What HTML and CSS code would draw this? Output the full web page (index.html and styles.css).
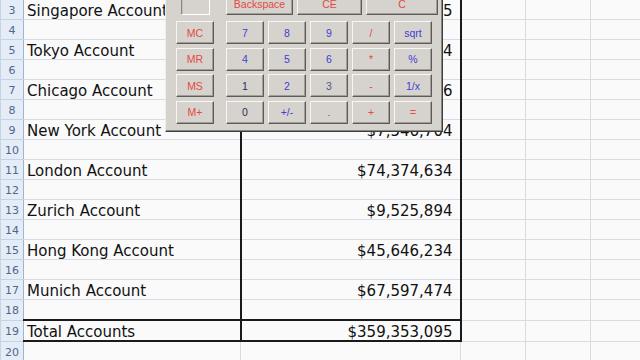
FILE: index.html
```html
<!DOCTYPE html>
<html>
<head>
<meta charset="utf-8">
<link rel="stylesheet" href="styles.css">
</head>
<body>
<div class="page">
  <table class="sheet">
    <colgroup>
      <col class="w-h"><col class="w-a"><col class="w-b"><col class="w-c"><col class="w-c"><col class="w-c"><col>
    </colgroup>
    <tbody>
      <tr><td class="h">3</td><td class="a">Singapore Account</td><td class="b">$52,418,365</td><td></td><td></td><td></td><td></td></tr>
      <tr><td class="h">4</td><td class="a"></td><td class="b"></td><td></td><td></td><td></td><td></td></tr>
      <tr><td class="h">5</td><td class="a">Tokyo Account</td><td class="b">$61,327,514</td><td></td><td></td><td></td><td></td></tr>
      <tr><td class="h">6</td><td class="a"></td><td class="b"></td><td></td><td></td><td></td><td></td></tr>
      <tr><td class="h">7</td><td class="a">Chicago Account</td><td class="b">$40,916,276</td><td></td><td></td><td></td><td></td></tr>
      <tr><td class="h">8</td><td class="a"></td><td class="b"></td><td></td><td></td><td></td><td></td></tr>
      <tr><td class="h">9</td><td class="a">New York Account</td><td class="b">$7,546,704</td><td></td><td></td><td></td><td></td></tr>
      <tr><td class="h">10</td><td class="a"></td><td class="b"></td><td></td><td></td><td></td><td></td></tr>
      <tr><td class="h">11</td><td class="a">London Account</td><td class="b">$74,374,634</td><td></td><td></td><td></td><td></td></tr>
      <tr><td class="h">12</td><td class="a"></td><td class="b"></td><td></td><td></td><td></td><td></td></tr>
      <tr><td class="h">13</td><td class="a">Zurich Account</td><td class="b">$9,525,894</td><td></td><td></td><td></td><td></td></tr>
      <tr><td class="h">14</td><td class="a"></td><td class="b"></td><td></td><td></td><td></td><td></td></tr>
      <tr><td class="h">15</td><td class="a">Hong Kong Account</td><td class="b">$45,646,234</td><td></td><td></td><td></td><td></td></tr>
      <tr><td class="h">16</td><td class="a"></td><td class="b"></td><td></td><td></td><td></td><td></td></tr>
      <tr><td class="h">17</td><td class="a">Munich Account</td><td class="b">$67,597,474</td><td></td><td></td><td></td><td></td></tr>
      <tr><td class="h">18</td><td class="a"></td><td class="b"></td><td></td><td></td><td></td><td></td></tr>
      <tr class="total"><td class="h">19</td><td class="a">Total Accounts</td><td class="b">$359,353,095</td><td></td><td></td><td></td><td></td></tr>
      <tr><td class="h">20</td><td class="a"></td><td class="plain"></td><td></td><td></td><td></td><td></td></tr>
      <tr><td class="h">21</td><td class="a"></td><td class="plain"></td><td></td><td></td><td></td><td></td></tr>
    </tbody>
  </table>

  <div class="calc">
    <div class="calc-top">
      <div class="mem"></div>
      <div class="topkeys">
        <div class="key red">Backspace</div>
        <div class="key red">CE</div>
        <div class="key red">C</div>
      </div>
    </div>
    <div class="calc-main">
      <div class="memkeys">
        <div class="key red">MC</div>
        <div class="key red">MR</div>
        <div class="key red">MS</div>
        <div class="key red">M+</div>
      </div>
      <div class="keypad">
        <div class="key blue">7</div>
        <div class="key blue">8</div>
        <div class="key blue">9</div>
        <div class="key red">/</div>
        <div class="key blue">sqrt</div>
        <div class="key blue">4</div>
        <div class="key blue">5</div>
        <div class="key blue">6</div>
        <div class="key red">*</div>
        <div class="key blue">%</div>
        <div class="key dark">1</div>
        <div class="key blue">2</div>
        <div class="key grey">3</div>
        <div class="key red">-</div>
        <div class="key blue">1/x</div>
        <div class="key dark">0</div>
        <div class="key blue">+/-</div>
        <div class="key grey">.</div>
        <div class="key red">+</div>
        <div class="key red">=</div>
      </div>
    </div>
  </div>
</div>
</body>
</html>
```

FILE: styles.css
```css
html, body {
  margin: 0;
  padding: 0;
}
body {
  width: 640px;
  height: 360px;
  overflow: hidden;
  background: #fafafa;
}
.page {
  position: relative;
  width: 640px;
  height: 360px;
  overflow: hidden;
}
.sheet {
  border-collapse: collapse;
  table-layout: fixed;
  width: 700px;
  margin-top: -1px;
  font-family: "DejaVu Sans", Verdana, sans-serif;
  font-size: 15px;
  color: #111111;
}
.w-h { width: 23px; }
.w-a { width: 217px; }
.w-b { width: 220px; }
.w-c { width: 65px; }
.sheet tr {
  height: 20px;
}
.sheet td {
  padding: 3px 0 0 0;
  height: 16px;
  border: 1px solid #d9dbe3;
  background: #fafafa;
  white-space: nowrap;
  overflow: hidden;
  line-height: 16px;
  vertical-align: top;
}
.sheet td.h {
  background: #e4ecf7;
  border-color: #c6d3e3;
  border-right: 1px solid #9fb5cf;
  color: #4f6789;
  font-size: 11px;
  text-align: center;
}
.sheet td.a {
  padding-left: 3px;
}
.sheet td.b {
  text-align: right;
  padding-right: 7px;
  border-left: 2px solid #1a1a1a;
  border-right: 2px solid #1a1a1a;
}
.sheet td.plain {
  border-left: 1px solid #d9dbe3;
  border-right: 1px solid #d9dbe3;
}
.sheet tr.total td.a,
.sheet tr.total td.b {
  border-top: 2px solid #1a1a1a;
  border-bottom: 2px solid #1a1a1a;
}

/* Calculator window */
.calc {
  position: absolute;
  left: 165px;
  top: -20px;
  width: 278px;
  height: 152px;
  box-sizing: border-box;
  padding-top: 11px;
  background: #d6d3ce;
  border: 1px solid;
  border-color: #efeeea #3c3c3c #3c3c3c #efeeea;
  box-shadow: inset -1px -1px 0 #8a8884;
  font-family: "Liberation Sans", Arial, sans-serif;
  font-size: 10.5px;
}
.calc-top {
  display: flex;
  height: 23px;
  padding-left: 15px;
}
.mem {
  width: 29px;
  height: 23px;
  box-sizing: border-box;
  border: 1px solid;
  border-color: #8a8884 #ffffff #ffffff #8a8884;
  box-shadow: inset 1px 1px 0 #c4c1bb;
  margin-right: 16px;
}
.topkeys {
  display: grid;
  grid-template-columns: 67px 65px 72px;
  column-gap: 4px;
}
.calc-main {
  display: flex;
  margin-top: 6px;
  padding-left: 10px;
  gap: 12px;
}
.memkeys {
  display: grid;
  grid-template-columns: 38px;
  grid-template-rows: repeat(4, 23px);
  row-gap: 3.5px;
}
.keypad {
  display: grid;
  grid-template-columns: repeat(5, 38px);
  grid-template-rows: repeat(4, 23px);
  column-gap: 4px;
  row-gap: 3.5px;
}
.key {
  box-sizing: border-box;
  height: 23px;
  display: flex;
  align-items: center;
  justify-content: center;
  background: #d6d3ce;
  border: 1px solid;
  border-color: #f7f6f3 #5e5c58 #5e5c58 #f7f6f3;
  box-shadow: inset -1px -1px 0 #a19e98;
}
.red { color: #e34a42; }
.blue { color: #3e3ed2; }
.dark { color: #2a2a5a; }
.grey { color: #55557e; }
```
